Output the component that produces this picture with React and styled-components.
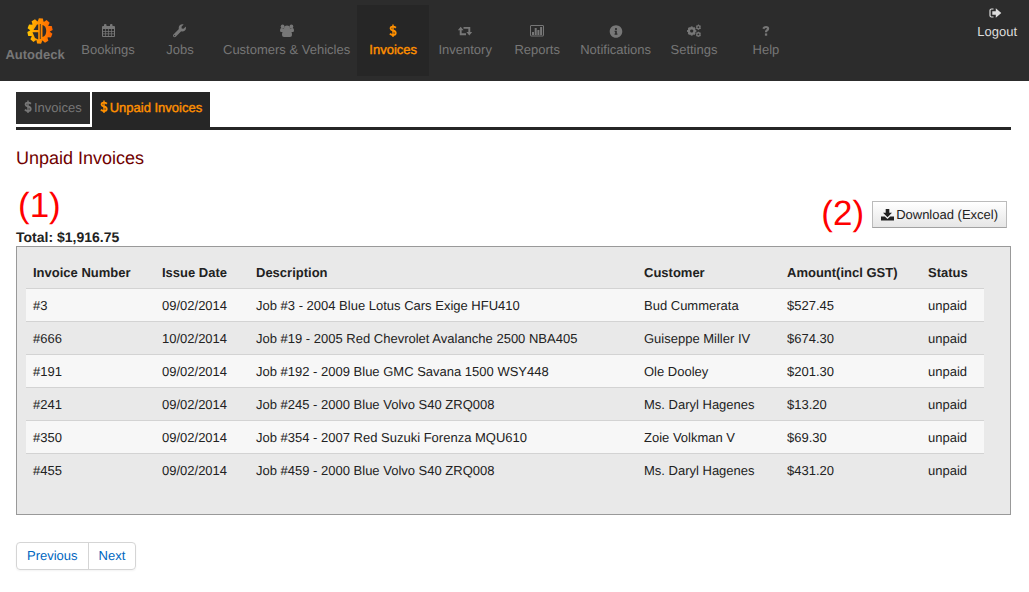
import React from "react";
import styled, { createGlobalStyle } from "styled-components";
import { FaWrench, FaInfoCircle } from "react-icons/fa";

const GlobalStyle = createGlobalStyle`
  *, *::before, *::after { box-sizing: border-box; }
  body {
    margin: 0;
    background: #fff;
    color: #222;
    font: 13px/18px "Liberation Sans", Arial, sans-serif;
    text-rendering: geometricPrecision;
  }
`;

const Header = styled.header`
  display: flex;
  align-items: flex-start;
  min-height: 81px;
  padding: 5px 12px 5px 6px;
  background: #2c2c2c;
`;

const Brand = styled.a`
  display: flex;
  flex-direction: column;
  align-items: center;
  width: 66px;
  padding: 13px 8px 0 0;
  color: #777;
  font-weight: bold;
  text-decoration: none;

  svg { margin: 0 0 2px 10px; }
`;

const Nav = styled.nav`
  display: flex;
  flex: 1;
`;

const NavLink = styled.a`
  display: flex;
  flex-direction: column;
  align-items: center;
  gap: 3px;
  min-width: 72px;
  height: 71px;
  padding: 19px 7px 0;
  background: ${(p) => (p.$active ? "#262626" : "transparent")};
  color: ${(p) => (p.$active ? "#ff9000" : "#777")};
  -webkit-text-stroke: ${(p) => (p.$active ? "0.4px" : "0")};
  text-decoration: none;
  white-space: nowrap;
`;

const Logout = styled.a`
  display: flex;
  flex-direction: column;
  align-items: center;
  gap: 3px;
  padding-top: 1px;
  color: #ddd;
  text-decoration: none;

  svg { margin-right: 4px; }
`;

const Main = styled.main`
  padding: 11px 18px 20px 16px;
`;

const Tabs = styled.nav`
  display: flex;
  align-items: flex-start;
  gap: 2px;
  border-bottom: 3px solid #262626;
`;

const Tab = styled.a`
  display: flex;
  align-items: flex-start;
  gap: 2px;
  height: ${(p) => (p.$active ? 35 : 32)}px;
  padding: 7px 8px 0;
  background: ${(p) => (p.$active ? "#262626" : "#2c2c2c")};
  color: ${(p) => (p.$active ? "#ff9000" : "#777")};
  -webkit-text-stroke: ${(p) => (p.$active ? "0.4px" : "0")};
  text-decoration: none;

  svg { margin-top: 1px; }
`;

const Title = styled.h1`
  margin: 16px 0 0;
  color: #700000;
  font-size: 18px;
  font-weight: normal;
  line-height: 24px;
`;

const Summary = styled.div`
  display: flex;
  justify-content: space-between;
  align-items: flex-start;
  padding: 16px 4px 0 0;
`;

const Marker = styled.div`
  padding-left: 2px;
  color: #f00;
  font-size: 35px;
  line-height: 40px;
`;

const Total = styled.div`
  padding-top: 2px;
  font-size: 14px;
  font-weight: bold;
  line-height: 18px;
`;

const Actions = styled.div`
  display: flex;
  align-items: center;
  gap: 8px;
  padding-top: 8px;
`;

const DownloadButton = styled.button`
  display: flex;
  align-items: center;
  gap: 2px;
  height: 27px;
  padding: 1px 8px 0;
  border: 1px solid #bbb;
  border-bottom-color: #a2a2a2;
  background: linear-gradient(#fff, #e6e6e6);
  color: #222;
  font: inherit;
  text-rendering: inherit;
`;

const Panel = styled.section`
  padding: 9px 26px 28px 9px;
  border: 1px solid #999;
  background: #e9e9e9;
`;

const Table = styled.table`
  width: 100%;
  table-layout: fixed;
  border-collapse: collapse;
`;

const Col = styled.col`
  width: ${(p) => p.$w};
`;

const HeadCell = styled.th`
  padding: 8px 7px 6px;
  text-align: left;
  white-space: nowrap;
`;

const Row = styled.tr`
  border-top: 1px solid #d3d3d3;

  &:nth-child(odd) { background: #f7f7f7; }
`;

const Cell = styled.td`
  padding: 8px 7px 6px;
`;

const Pager = styled.nav`
  display: inline-flex;
  margin-top: 27px;
  border: 1px solid #d5d5d5;
  border-radius: 4px;
  box-shadow: 0 1px 2px rgba(0, 0, 0, 0.05);
`;

const PageLink = styled.a`
  padding: 4px 10px;
  color: #0066c0;
  text-decoration: none;

  & + & { border-left: 1px solid #d5d5d5; }
`;

const Logo = () => (
  <svg width="26" height="26" viewBox="-13 -13 26 26" aria-hidden="true">
    <defs>
      <linearGradient id="brand" x1="0" x2="1">
        <stop offset="0" stopColor="#ffc800" />
        <stop offset="0.5" stopColor="#ff8c00" />
        <stop offset="1" stopColor="#ff6000" />
      </linearGradient>
      <mask id="gear" maskUnits="userSpaceOnUse" x="-13" y="-13" width="26" height="26">
        <circle r="10" fill="#fff" />
        {Array.from({ length: 10 }, (_, i) => (
          <path key={i} d="M-3 -9L-2 -12.600H2L3 -9Z" fill="#fff" transform={`rotate(${i * 36 + 4})`} />
        ))}
        <path d="M-6.500 -1L-3 -6.500H-1.800V-1Z" fill="#000" />
        <path d="M-7.500 1.300H-1.800V8.500L-5 7Z" fill="#000" />
        <path d="M0.300 -7V8" stroke="#000" strokeWidth="0.800" />
        <path d="M2.500 -6V6C7.500 5.500 7.500 -5.500 2.500 -6Z" fill="#000" />
      </mask>
    </defs>
    <rect x="-13" y="-13" width="26" height="26" fill="url(#brand)" mask="url(#gear)" />
  </svg>
);

const CalendarIcon = () => (
  <svg width="13" height="14" viewBox="0 0 13 14" fill="currentColor" aria-hidden="true">
    <path
      fillRule="evenodd"
      d="M1 2H2V1Q2 0 3 0H3.500Q4.500 0 4.500 1V2H8V1Q8 0 9 0H9.500Q10.500 0 10.500 1V2H12Q13 2 13 3V12Q13 13 12 13H1Q0 13 0 12V3Q0 2 1 2ZM1 5V7H3V5ZM3.700 5V7H6.200V5ZM6.900 5V7H9.300V5ZM10 5V7H12V5ZM1 7.700V9.500H3V7.700ZM3.700 7.700V9.500H6.200V7.700ZM6.900 7.700V9.500H9.300V7.700ZM10 7.700V9.500H12V7.700ZM1 10.200V12H3V10.200ZM3.700 10.200V12H6.200V10.200ZM6.900 10.200V12H9.300V10.200ZM10 10.200V12H12V10.200Z"
    />
  </svg>
);

const WrenchIcon = () => <FaWrench size={14} viewBox="0 -10 552 552" />;

const InfoIcon = () => <FaInfoCircle size={14} viewBox="-20 -40 552 552" />;

const GroupIcon = () => (
  <svg width="14" height="14" viewBox="0 0 14 14" fill="currentColor" aria-hidden="true">
    <circle cx="2.600" cy="2.400" r="1.900" />
    <circle cx="11.400" cy="2.400" r="1.900" />
    <circle cx="7" cy="4.600" r="3" />
    <path d="M1.200 4Q0 4.200 0 6.500Q0 8 1.200 8H2.500Q2 9.200 2 11Q2 13 4 13H10Q12 13 12 11Q12 9.200 11.500 8H12.800Q14 8 14 6.500Q14 4.200 12.800 4L10 4.500L7 7L4 4.500Z" />
  </svg>
);

const DollarIcon = () => (
  <svg width="8" height="14" viewBox="0 0 8 14" fill="none" stroke="currentColor" aria-hidden="true">
    <path d="M4 0.500V13" strokeWidth="1.400" />
    <path d="M6.900 3.700Q5.700 2.600 4 2.600Q1.600 2.600 1.600 4.400Q1.600 5.800 4 6.500Q6.700 7.200 6.700 9Q6.700 11 4 11Q2.200 11 0.900 9.700" strokeWidth="1.900" />
  </svg>
);

const RetweetIcon = () => (
  <svg width="14" height="14" viewBox="0 0 14 14" aria-hidden="true">
    <path d="M2.700 5V10.300H8M5.500 3.900H11.300V9" fill="none" stroke="currentColor" strokeWidth="1.900" />
    <path d="M2.700 2.700L5.600 6.300H-0.200ZM11.300 11.500L14.200 7.900H8.400Z" fill="currentColor" />
  </svg>
);

const ChartIcon = () => (
  <svg width="14" height="14" viewBox="0 0 14 14" aria-hidden="true">
    <rect x="0.5" y="1.500" width="13" height="10.500" rx="0.5" fill="none" stroke="currentColor" />
    <path d="M2 8H4V11H2ZM4.700 4H6.700V11H4.700ZM7.400 6H9.400V11H7.400ZM10.100 3H12.100V11H10.100Z" fill="currentColor" />
  </svg>
);

const Cog = ({ x, y, r, teeth }) => (
  <g transform={`translate(${x} ${y})`} stroke="currentColor" fill="none">
    <circle r={r * 0.6} strokeWidth={r * 0.5} />
    {Array.from({ length: teeth }, (_, i) => (
      <path key={i} d={`M0 ${-r * 0.75}V${-r}`} strokeWidth={r * 0.4} transform={`rotate(${(i * 360) / teeth})`} />
    ))}
  </g>
);

const CogsIcon = () => (
  <svg width="14" height="14" viewBox="0 0 14 14" aria-hidden="true">
    <Cog x={4.7} y={7} r={4.6} teeth={8} />
    <Cog x={11.400} y={3.300} r={2.700} teeth={6} />
    <Cog x={11.400} y={10.400} r={2.700} teeth={6} />
  </svg>
);

const QuestionIcon = () => (
  <svg width="8" height="14" viewBox="0 0 8 14" aria-hidden="true">
    <path d="M1.300 4.800Q2.200 3 4 3Q6.100 3 6.100 4.700Q6.100 5.700 5 6.300Q4 6.900 4 8.300" fill="none" stroke="currentColor" strokeWidth="2.200" />
    <path d="M2.900 9.400H5.200V11.700H2.900Z" fill="currentColor" />
  </svg>
);

const SignOutIcon = () => (
  <svg width="13" height="14" viewBox="0 0 13 14" aria-hidden="true">
    <path d="M4.500 3H2.500Q1 3 1 4.500V9.500Q1 11 2.500 11H4.500" fill="none" stroke="currentColor" strokeWidth="1.200" />
    <path d="M3.300 5.200H6.800V2.300L12.300 7L6.800 11.700V8.800H3.300Z" fill="currentColor" />
  </svg>
);

const DownloadIcon = () => (
  <svg width="13" height="14" viewBox="0 0 13 14" fill="currentColor" aria-hidden="true">
    <path d="M4.700 1H8.300V4.700H11L6.500 9.200L2 4.700H4.700Z" />
    <path d="M0 8.500H3.800L6.500 11L9.200 8.500H13V12.500H0Z" />
  </svg>
);

const navItems = [
  { label: "Bookings", Icon: CalendarIcon },
  { label: "Jobs", Icon: WrenchIcon },
  { label: "Customers & Vehicles", Icon: GroupIcon },
  { label: "Invoices", Icon: DollarIcon, active: true },
  { label: "Inventory", Icon: RetweetIcon },
  { label: "Reports", Icon: ChartIcon },
  { label: "Notifications", Icon: InfoIcon },
  { label: "Settings", Icon: CogsIcon },
  { label: "Help", Icon: QuestionIcon },
];

const columns = [
  ["Invoice Number", "129px"],
  ["Issue Date", "94px"],
  ["Description", "auto"],
  ["Customer", "143px"],
  ["Amount(incl GST)", "141px"],
  ["Status", "63px"],
];

const invoices = [
  ["#3", "09/02/2014", "Job #3 - 2004 Blue Lotus Cars Exige HFU410", "Bud Cummerata", "$527.45", "unpaid"],
  ["#666", "10/02/2014", "Job #19 - 2005 Red Chevrolet Avalanche 2500 NBA405", "Guiseppe Miller IV", "$674.30", "unpaid"],
  ["#191", "09/02/2014", "Job #192 - 2009 Blue GMC Savana 1500 WSY448", "Ole Dooley", "$201.30", "unpaid"],
  ["#241", "09/02/2014", "Job #245 - 2000 Blue Volvo S40 ZRQ008", "Ms. Daryl Hagenes", "$13.20", "unpaid"],
  ["#350", "09/02/2014", "Job #354 - 2007 Red Suzuki Forenza MQU610", "Zoie Volkman V", "$69.30", "unpaid"],
  ["#455", "09/02/2014", "Job #459 - 2000 Blue Volvo S40 ZRQ008", "Ms. Daryl Hagenes", "$431.20", "unpaid"],
];

export default function App() {
  return (
    <>
      <GlobalStyle />
      <Header>
        <Brand href="#home">
          <Logo />
          Autodeck
        </Brand>
        <Nav>
          {navItems.map(({ label, Icon, active }) => (
            <NavLink key={label} href="#nav" $active={active}>
              <Icon />
              {label}
            </NavLink>
          ))}
        </Nav>
        <Logout href="#logout">
          <SignOutIcon />
          Logout
        </Logout>
      </Header>
      <Main>
        <Tabs>
          <Tab href="#invoices">
            <DollarIcon />
            Invoices
          </Tab>
          <Tab href="#unpaid" $active>
            <DollarIcon />
            Unpaid Invoices
          </Tab>
        </Tabs>
        <Title>Unpaid Invoices</Title>
        <Summary>
          <div>
            <Marker>(1)</Marker>
            <Total>Total: $1,916.75</Total>
          </div>
          <Actions>
            <Marker>(2)</Marker>
            <DownloadButton type="button">
              <DownloadIcon />
              Download (Excel)
            </DownloadButton>
          </Actions>
        </Summary>
        <Panel>
          <Table>
            <colgroup>
              {columns.map(([name, width]) => (
                <Col key={name} $w={width} />
              ))}
            </colgroup>
            <thead>
              <tr>
                {columns.map(([name]) => (
                  <HeadCell key={name} scope="col">{name}</HeadCell>
                ))}
              </tr>
            </thead>
            <tbody>
              {invoices.map((invoice) => (
                <Row key={invoice[0]}>
                  {invoice.map((value, i) => (
                    <Cell key={i}>{value}</Cell>
                  ))}
                </Row>
              ))}
            </tbody>
          </Table>
        </Panel>
        <Pager aria-label="Pages">
          <PageLink href="#previous">Previous</PageLink>
          <PageLink href="#next">Next</PageLink>
        </Pager>
      </Main>
    </>
  );
}
